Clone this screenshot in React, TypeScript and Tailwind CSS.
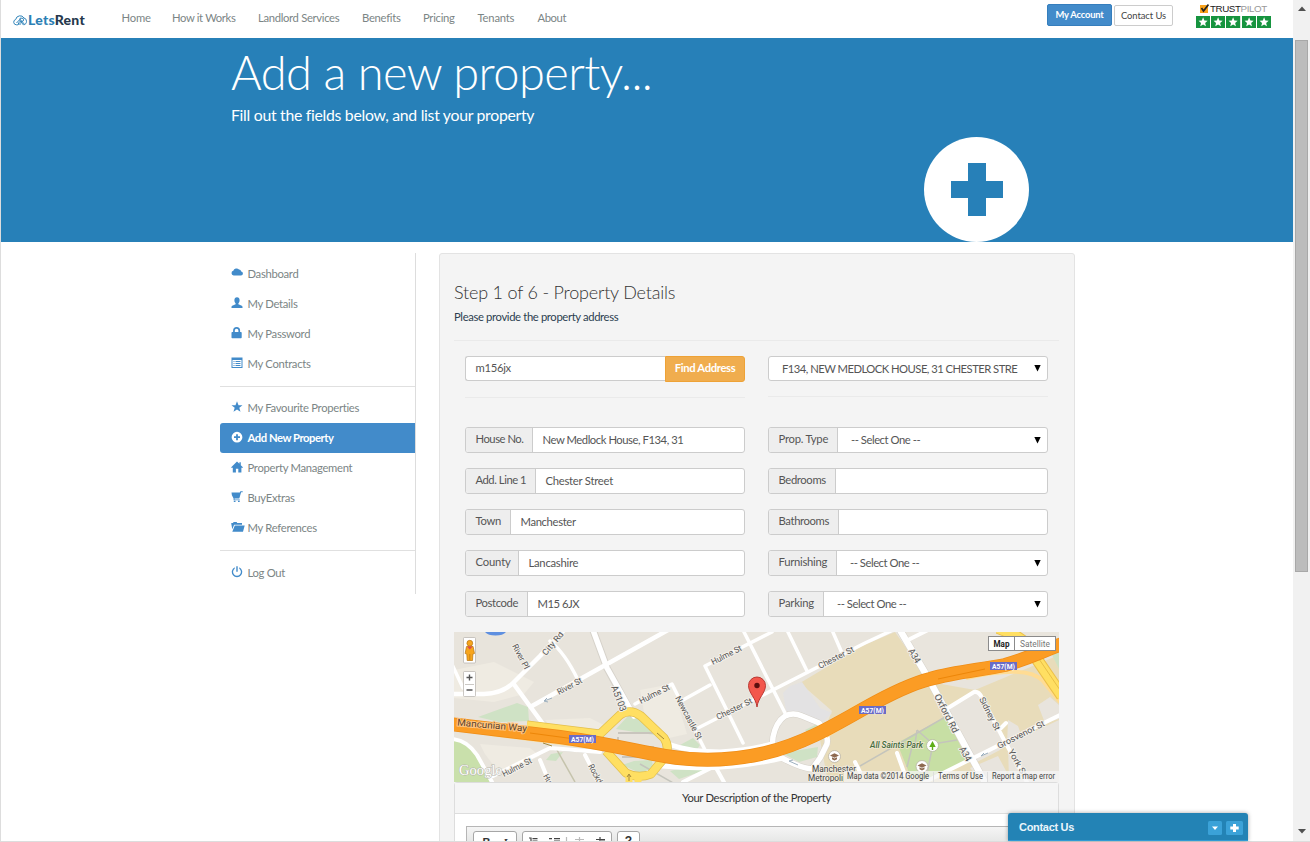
import React from 'react';

const navItems = [
  { label: 'Home', cls: 'w-[50.5px] tracking-[-0.2px]' },
  { label: 'How it Works', cls: 'w-[86px] tracking-[-0.36px]' },
  { label: 'Landlord Services', cls: 'w-[104px] tracking-[-0.32px]' },
  { label: 'Benefits', cls: 'w-[61px] tracking-[-0.28px]' },
  { label: 'Pricing', cls: 'w-[54.5px] tracking-[-0.28px]' },
  { label: 'Tenants', cls: 'w-[60px] tracking-[-0.2px]' },
  { label: 'About', cls: 'tracking-[-0.4px]' },
];

const icons: Record<string, React.ReactNode> = {
  cloud: <path d="M2.600 8.500a2.400 2.400 0 0 1-.3-4.700A3.300 3.300 0 0 1 8 2.600a2.300 2.300 0 0 1 2.200 1.900c1.200.1 1.700 1 1.700 2 0 1.200-.8 2-1.900 2z" />,
  user: <path d="M6 .3c1.700 0 2.600 1.200 2.600 3 0 1.300-.5 2.400-1.200 3v.9l3.400 1.500c.5.250.7.7.7 1.200v1H.5v-1c0-.5.2-.95.7-1.200l3.400-1.500v-.9c-.7-.6-1.200-1.700-1.200-3C3.400 1.500 4.300.3 6 .3z" />,
  lock: <path fillRule="evenodd" d="M2.100 5V3.600a3.500 3.500 0 0 1 7 0V5h.9c.4 0 .7.3.7.7v4.900c0 .4-.3.7-.7.7H1.200c-.4 0-.7-.3-.7-.7V5.700c0-.4.3-.7.7-.7zm1.700 0h3.600V3.600a1.800 1.800 0 0 0-3.600 0z" />,
  list: <path fillRule="evenodd" d="M.5.500h11v10.500H.5zM1.500 3v7h9V3zM2.500 4h1v1h-1zM4.500 4h5v1h-5zM2.500 6h1v1h-1zM4.500 6h5v1h-5zM2.500 8h1v1h-1zM4.500 8h5v1h-5z" />,
  star: <path d="M6 .3l1.500 3.900 4 .1-3.200 2.500 1.200 4L6 8.500l-3.500 2.300 1.200-4L.5 4.300l4-.1z" />,
  plus: <path fillRule="evenodd" d="M6 .8a5.400 5.400 0 1 1 0 10.800A5.400 5.400 0 0 1 6 .8zM5.100 3.200v2.100H3v1.800h2.100v2.100h1.800V7.100H9V5.300H6.900V3.200z" />,
  home: <path d="M6 .4l2.400 2.400V1.200h1.400v3l2.100 2.100v.5h-1.500V11.500H7.300V7.800H4.900v3.700H1.800V6.800H.2v-.5z" />,
  cart: <path d="M.5 1.500h8.300l.6-1.200h2.300v.9h-1.600L8.300 7.600H3.500v.8h5.300v.8H2.600V7.600L.9 4.300zM2.800 9.700h1.700V11H2.800zM7 9.700h1.700V11H7z" />,
  folder: <path d="M.3 3V1.900h1.700l.6-.9h3l.6.900h4.800v1.800H3.100L1.300 8.200.3 3zM3.800 4.500h9.900L12 10.800H1.300z" />,
  off: <path d="M5.300.2h1.400v5.600H5.300zM3.700 1.300v1.500a3.900 3.900 0 1 0 4.600 0V1.300a5.200 5.200 0 1 1-4.600 0z" />,
};

function Glyph({ name }: { name: string }) {
  return (
    <svg className="h-[12px] w-[14px] shrink-0 -translate-y-px" viewBox="0 0 14 12" fill="currentColor">
      {icons[name]}
    </svg>
  );
}

function SideItem({ icon, label, active = false }: { icon: string; label: string; active?: boolean }) {
  return (
    <li
      className={
        active
          ? 'flex h-[30px] items-center gap-[2.5px] rounded-l-[3px] bg-[#428bca] pl-[11px] font-bold tracking-[-0.45px] text-white'
          : 'flex h-[30px] items-center gap-[2.5px] pl-[11px] tracking-[-0.3px] text-[#7b8585]'
      }
    >
      <span className={active ? 'text-white' : 'text-[#428bca]'}>
        <Glyph name={icon} />
      </span>
      <span>{label}</span>
    </li>
  );
}

function Field({ label, value, labelCls, valueCls = 'tracking-[-0.25px]', select = false }: { label: string; value: string; labelCls: string; valueCls?: string; select?: boolean }) {
  return (
    <div className="flex h-[26px] overflow-hidden rounded-[3px] border border-[#ccc] bg-white text-[#555]">
      <div className={'flex shrink-0 items-center whitespace-nowrap border-r border-[#ccc] bg-[#eee] pb-[2px] pl-[9.5px] ' + labelCls}>{label}</div>
      <div className={'flex flex-1 items-center whitespace-nowrap ' + (select ? 'pl-[13px] tracking-[-0.46px]' : 'pl-[9.5px] ' + valueCls)}>{value}</div>
      {select && <Caret />}
    </div>
  );
}

function Caret() {
  return (
    <div className="flex items-center pr-[6px]">
      <svg className="h-[7px] w-[7px]" viewBox="0 0 7 7"><path d="M.3 0h6.400L3.500 6.500z" fill="#000" /></svg>
    </div>
  );
}

function MapLabel({ x, y, r, w, children, size = 8.5 }: { x: number; y: number; r: number; w: number; children: string; size?: number }) {
  return (
    <text x={x} y={y} transform={`rotate(${r} ${x} ${y})`} textLength={w} lengthAdjust="spacingAndGlyphs" fontSize={size} fill="#555" stroke="#f3f0ea" strokeWidth="2" paintOrder="stroke" strokeLinejoin="round">
      {children}
    </text>
  );
}

function Shield({ x, y }: { x: number; y: number }) {
  return (
    <g>
      <rect x={x} y={y} width="27" height="8" fill="#6a6cc6" />
      <text x={x + 2} y={y + 6.500} fontSize="6.800" fontWeight="700" fill="#fff" textLength="23" lengthAdjust="spacingAndGlyphs">A57(M)</text>
    </g>
  );
}

const motorway = 'M450 724L560 737C610 744 640 752 665 756C700 762 735 760 765 753C800 745 830 728 865 708C890 694 910 684 930 679C955 672 980 670 1005 665C1030 658 1040 652 1062 644';
const loop = 'M772 750L773 737Q776 722 785 716Q793 712 802 716L819 723Q829 733 827 744L820 758L812 769Q800 768 780 757';
const interchange = 'M527 725L600 734L620 715Q630 708 641 716L664 738Q670 747 665 757L651 774Q638 779 626 773L606 751';

function PropertyMap() {
  return (
    <svg className="block h-[150px] w-[605px]" viewBox="454 632 605 150" fontFamily="Roboto, sans-serif">
      <rect x="454" y="632" width="605" height="150" fill="#e8e4dc" />
      <g fill="#efebe2">
        <path d="M454 670l40-8 40 20-10 12-30 8-40-4z" />
        <path d="M545 720l45-2 20 10-10 6-50-8z" />
        <path d="M640 690l32-6 15 50-18 4-25-26z" />
        <path d="M480 744l50 4 10 8-40 18-15-20z" />
      </g>
      <path d="M800 683L862 646 895 632 930 682 975 690 1059 655V782H828L820 740 832 711z" fill="#e8dcba" />
      <path d="M903 632h156v18l-60 16-70 14z" fill="#e9e5dd" />
      <path d="M783 693l7-7 12-4 18 26 12 5-9 8-37-10z" fill="#e3e2e3" />
      <path d="M948 709L976 691 1003 737 1000 750 975 763zM1008 720l10 6 5 14-16 6zM1038 705l12-8 9 8v14l-14 4zM1008 744l51-24v62h-50zM970 768l28-12 14 26h-30z" fill="#e8e4dd" />
      <path d="M897 743L947 716 968 763 925 780 910 775z" fill="#c7dfa4" />
      <path d="M454 739Q472 740 479 758L490 782H454z" fill="#c9e0ab" />
      <g fill="#cfe2c5">
        <path d="M478 717l22-8 17-6 11 4 1 14-30 1z" />
        <path d="M616 729l12-13 10 1 17 18-14-2z" />
        <path d="M622 765l12-4 18-1 1 8-13 5z" />
        <path d="M546 760l5-6 12-2-7 9z" />
        <path d="M680 745l13-7 7 7-4 6z" />
        <path d="M670 771l26-6 10 5-27 9z" />
        <path d="M782 753l36-6-1 10-18 5z" />
        <path d="M805 730l12-6 3 4-12 5z" />
        <path d="M1052 655l7-4v18z" />
      </g>
      <path d="M485 632h21q-3 3.500-10.500 3.500T485 632z" fill="#5e8fe0" />
      <path d="M618 733h34v-4M618 737v10h36M622 757h31" fill="none" stroke="#c9c5bd" strokeWidth="2" />
      <path d="M860 766L947 716M897 743l18 1 2-14M917 730l16 14 24-4M933 744l-6 30M907 767l6-24M640 764l35 20M560 750q30 3 40 1" fill="none" stroke="#c4c4bc" strokeWidth="1.500" />
      <path d="M557 750l18 32" fill="none" stroke="#c5c3ac" strokeWidth="1.500" />

      <g fill="none" stroke="#d6d2ca" strokeLinecap="round" strokeLinejoin="round">
        <path d="M593 630L607 668 632 714M900 630L927 676 987 786" strokeWidth="7.500" />
        <path d={loop} strokeWidth="6.500" />
      </g>
      <g fill="none" stroke="#fff" strokeLinecap="round" strokeLinejoin="round">
        <path strokeWidth="4.500" d="M450 694H484Q503 693 513 683L540 656 564 630M513 683L543 724M532 706L668 630" />
        <path strokeWidth="3.500" d="M550 641Q565 653 578 680M450 660L463 688M683 700L710 685M635 704L672 684 706 752M705 666L772 632M705 666L743 743M698 728L865 643 893 630M787 630L807 671M832 630L842 653M743 630L785 713" />
        <path strokeWidth="5.500" d="M593 630L607 668 634 716" />
        <path strokeWidth="6.500" d="M900 630L927 676 987 786" />
        <path strokeWidth="5.500" d={loop} />
        <path strokeWidth="5" d="M668 744Q690 752 720 752 750 750 772 744M662 766Q722 772 782 758" />
        <path strokeWidth="4" d="M683 782L715 766 725 784M452 739Q467 740 477 755L492 782M493 776L550 748 600 752M540 760L550 784M585 755L600 784M908 640L928 630" />
        <path strokeWidth="4" d="M948 708L974 692Q979 691 982 698L1003 738 1028 784M1001 728L1006 723M1062 714L925 782M897 753L905 775M855 762l5 10" />
      </g>
      <g fill="none" strokeLinejoin="round">
        <path d="M490 734L600 748M850 710L905 683M826 736L870 710M966 678Q1027 664 1043 681L1060 702" stroke="#ffdc93" strokeWidth="4" />
        <path d={interchange} stroke="#e3bf4c" strokeWidth="9" />
        <path d={interchange} stroke="#ffdf62" strokeWidth="7.500" />
        <path d="M629 775V784M638 775V784" stroke="#ffdf62" strokeWidth="7" />
        <path d="M998 628Q1030 640 1034 655L1062 696" stroke="#ecc04b" strokeWidth="12" />
        <path d="M998 628Q1030 640 1034 655L1062 696" stroke="#ffdf62" strokeWidth="10" />
        <path d="M1037 656L1062 693" stroke="#e8bf46" strokeWidth="1" />
        <path d={motorway} stroke="#ef8d16" strokeWidth="14" />
        <path d={motorway} stroke="#fb9c24" strokeWidth="12.500" />
        <path d="M530 733L575 739M938 679L985 669" stroke="#ed8608" strokeWidth="1" />
      </g>
      <g stroke="#9db0bf" strokeWidth="1" fill="none">
        <path d="M544 701l8-3M544 701l3-3M544 701l4 1M789 761l9 4M789 761l4-1M981 756l7-3M981 756l3-3" />
        <path d="M543 743l9 3M629 781v-6M627 777l2-3 2 3M657 733l7 6" stroke="#a4883c" />
      </g>

      <MapLabel x={512} y={646} r={62} w={27}>River Pl</MapLabel>
      <MapLabel x={546} y={656} r={-50} w={28}>City Rd</MapLabel>
      <MapLabel x={559} y={695} r={-28} w={27}>River St</MapLabel>
      <MapLabel x={611} y={687} r={69} w={27} size={9.500}>A5103</MapLabel>
      <MapLabel x={641} y={704} r={-27} w={33}>Hulme St</MapLabel>
      <MapLabel x={713} y={665} r={-27} w={33}>Hulme St</MapLabel>
      <MapLabel x={675} y={698} r={62} w={48}>Newcastle St</MapLabel>
      <MapLabel x={718} y={720} r={-26} w={39}>Chester St</MapLabel>
      <MapLabel x={820} y={669} r={-27} w={39}>Chester St</MapLabel>
      <MapLabel x={908} y={651} r={59} w={15} size={9.500}>A34</MapLabel>
      <MapLabel x={934} y={696} r={63} w={42} size={9.500}>Oxford Rd</MapLabel>
      <MapLabel x={959} y={749} r={61} w={15} size={9.500}>A34</MapLabel>
      <MapLabel x={979} y={699} r={63} w={36}>Sidney St</MapLabel>
      <MapLabel x={999} y={749} r={-27} w={52}>Grosvenor St</MapLabel>
      <MapLabel x={1008} y={751} r={61} w={30}>York St</MapLabel>
      <MapLabel x={504} y={777} r={-27} w={32}>Hulme St</MapLabel>
      <MapLabel x={543} y={776} r={62} w={24}>Hunt St</MapLabel>
      <MapLabel x={588} y={766} r={62} w={32}>Rockdove</MapLabel>
      <g transform="rotate(5 457 725)">
        <text x="457" y="725.500" fontSize="9.500" fill="#5b422c" stroke="#ffc681" strokeWidth="2" paintOrder="stroke" textLength="70" lengthAdjust="spacingAndGlyphs">Mancunian Way</text>
      </g>
      <Shield x={569} y={735} />
      <Shield x={859} y={706} />
      <Shield x={990} y={662} />
      <text x="870" y="748" fontSize="8.500" fontStyle="italic" fontWeight="500" fill="#456b3d" stroke="#eee7d2" strokeWidth="1.500" paintOrder="stroke" textLength="53" lengthAdjust="spacingAndGlyphs">All Saints Park</text>
      <circle cx="932.500" cy="745.500" r="6" fill="#fff" stroke="#b3b79c" strokeWidth=".8" />
      <path d="M932.500 741l3.200 6h-2.500v3h-1.400v-3h-2.500z" fill="#5fae19" />
      {[{ x: 834.5, y: 756.5 }, { x: 922, y: 766.5 }].map((p) => (
        <g key={p.x}>
          <circle cx={p.x} cy={p.y} r="6" fill="#fff" stroke="#b9b2a3" strokeWidth=".8" />
          <path d={`M${p.x - 4.500} ${p.y - 1}l4.500-2.200 4.500 2.200-4.500 2.200zM${p.x - 2.500} ${p.y + 0.8}v2l2.500 1.200 2.500-1.200v-2l-2.500 1.200z`} fill="#8e6a51" />
        </g>
      ))}
      <g fontSize="8.500" fill="#444" stroke="#f3eee2" strokeWidth="1.500" paintOrder="stroke">
        <text x="812" y="772" textLength="44" lengthAdjust="spacingAndGlyphs">Manchester</text>
        <text x="808" y="781" textLength="35" lengthAdjust="spacingAndGlyphs">Metropoli</text>
      </g>
      <rect x="844" y="771" width="215" height="11" fill="#f5f5f5" fillOpacity=".75" />
      <g fontSize="8.200" fill="#444">
        <text x="847" y="779" textLength="82" lengthAdjust="spacingAndGlyphs">Map data ©2014 Google</text>
        <text x="938" y="779" textLength="45" lengthAdjust="spacingAndGlyphs">Terms of Use</text>
        <text x="992" y="779" textLength="63" lengthAdjust="spacingAndGlyphs">Report a map error</text>
      </g>
      <path d="M933.500 772v10M987.500 772v10" stroke="#ddd" />
      <text x="459" y="775" fontFamily="'Liberation Serif', serif" fontSize="14.500" fill="#fff" stroke="#b5b5ac" strokeWidth="1" paintOrder="stroke" textLength="43" lengthAdjust="spacingAndGlyphs">Google</text>

      <path d="M757 707C756 698 748.500 693 748.500 685.500A8.500 8.500 0 0 1 765.500 685.500C765.500 693 758 698 757 707z" fill="#f3574c" stroke="#b3302a" strokeWidth=".9" />
      <circle cx="757" cy="685.500" r="2.700" fill="#5c0f0e" />

      <g stroke="#b4b0aa" strokeWidth=".7">
        <rect x="463.500" y="637.500" width="12" height="25.500" rx="1" fill="#fff" />
        <rect x="463.500" y="671.500" width="12" height="25" rx="1" fill="#fff" />
        <path d="M465 684.500h9" />
      </g>
      <path d="M466.500 677.500h6M469.500 674.500v6M466.500 690h6" stroke="#555" strokeWidth="1.400" />
      <circle cx="469.800" cy="643.200" r="2.900" fill="#f7a51c" stroke="#b57414" strokeWidth=".7" />
      <path d="M466.500 646.500h6.600l1.400 7-1.600.5-.4 6.500h-5.300l-.4-6.500-1.700-.5z" fill="#f7a51c" stroke="#b57414" strokeWidth=".7" />
      <path d="M467 646.500h5.600l-2.800 3z" fill="#e0484a" />
      <path d="M469.800 654v6" stroke="#b57414" strokeWidth=".7" />

      <rect x="988.500" y="636.500" width="67" height="14" fill="#fff" stroke="#8b8b8b" strokeWidth="1" />
      <path d="M1014.500 637v14" stroke="#8b8b8b" />
      <text x="993.500" y="647" fontSize="8.300" fontWeight="700" fill="#222" textLength="16" lengthAdjust="spacingAndGlyphs">Map</text>
      <text x="1020" y="647" fontSize="8.300" fill="#777" textLength="30" lengthAdjust="spacingAndGlyphs">Satellite</text>
    </svg>
  );
}

function Logo() {
  return (
    <div className="flex h-[38px] w-[120px] items-center pl-[12px] pt-[2px]">
      <svg className="h-[11px] w-[15px] shrink-0" viewBox="0 0 15 11" fill="none" stroke="#2f83b9" strokeWidth="1">
        <path d="M5 9.800H3.300A2.700 2.700 0 0 1 2.700 4.500 4.500 4.500 0 0 1 11 3a3.300 3.300 0 0 1 2.500 3.300c0 2-1.200 3.300-2.800 3.500" />
        <path d="M3.500 8L7 4.300l4.500 5M5.500 9.800V7.500M7 10V3.200h2a1.600 1.600 0 0 1 0 3.200H7.500l3 3.600" />
      </svg>
      <span className="font-['Lato',sans-serif] text-[14px] font-black leading-none tracking-[0.25px] text-[#2b80b5]">
        Lets<span className="text-[#26384d]">Rent</span>
      </span>
    </div>
  );
}

function TrustPilot() {
  return (
    <div className="flex w-[75px] flex-col gap-[2px] pt-[3px]">
      <div className="flex h-[11px] items-center pl-[4px]">
        <svg className="h-[9px] w-[9px]" viewBox="0 0 9 9"><path d="M0 1h8v8H0z" fill="#f9a21b" /><path d="M1.500 4l2 3L8.500.5" fill="none" stroke="#222" strokeWidth="1.700" /></svg>
        <span className="ml-px font-['Liberation_Sans',sans-serif] text-[9.8px] leading-none tracking-[-0.42px] text-[#222]">TRUST<span className="text-[#999]">PILOT</span></span>
      </div>
      <div className="flex gap-px">
        {[0, 1, 2, 3, 4].map((i) => (
          <svg key={i} className="h-[12px] w-[14.2px]" viewBox="0 0 14.400 12" preserveAspectRatio="none"><path d="M0 0h14.400v12H0z" fill="#16943f" /><path d="M7.200 1.300l1.300 3.100 3.300.3-2.500 2.200.8 3.300-2.900-1.800-2.900 1.800.8-3.300-2.500-2.200 3.300-.3z" fill="#fff" /></svg>
        ))}
      </div>
    </div>
  );
}

function EditorToolbar() {
  return (
    <div className="mx-[11px] mt-[12px] flex h-[40px] gap-[5px] border border-[#b6b6b6] bg-linear-to-b from-[#f5f5f5] to-[#cfd1cf] pl-[6px] pt-[4px]">
      <div className="flex h-[26px] w-[44px] items-start justify-around rounded-[3px] border border-[#a6a6a6] bg-white px-[2px] pt-[3px] font-['Liberation_Sans',sans-serif] text-[11px] font-bold leading-[14px] text-[#333]">
        <span>B</span>
        <span className="font-['Liberation_Serif',serif] italic">I</span>
      </div>
      <div className="h-[26px] w-[90px] rounded-[3px] border border-[#a6a6a6] bg-white">
        <svg className="h-[24px] w-[88px]" viewBox="0 0 88 24" fill="none" stroke="#444" strokeWidth="1.200">
          <path d="M6 6h2v6M9.500 6.600h5M9.500 9h5M26 6.600h3M31 6.600h6M31 9h6" />
          <path d="M43.500 5v14" stroke="#bbb" />
          <path d="M52 7.500h9M56.500 5v6" stroke="#bbb" />
          <path d="M73 7.500h9M77 5v6M78 9h4" />
        </svg>
      </div>
      <div className="h-[26px] w-[23px] rounded-[3px] border border-[#a6a6a6] bg-white pt-[2px] text-center font-['Liberation_Sans',sans-serif] text-[12px] font-bold leading-[14px] text-[#333]">?</div>
    </div>
  );
}

export default function App() {
  return (
    <div className="relative flex h-[842px] w-[1310px] overflow-hidden bg-white font-['Lato',sans-serif] text-[11.25px] leading-[16px] text-[#2c3e50]">
      <div className="flex w-[1293px] flex-col border-l border-[#ddd]">
        <header className="flex h-[38px] shrink-0">
          <Logo />
          <nav className="flex flex-1 pl-[0.5px] pt-[10px] text-[#7b8585]">
            {navItems.map((n) => (
              <a key={n.label} className={'shrink-0 whitespace-nowrap ' + n.cls}>{n.label}</a>
            ))}
          </nav>
          <div className="flex w-[149px] gap-[2px] pt-[4px] text-[9.4px]">
            <button className="h-[22px] w-[65px] rounded-[2px] border border-[#357ebd] bg-[#428bca] font-bold tracking-[-0.2px] text-white">My Account</button>
            <button className="mt-px h-[21px] w-[59px] rounded-[2px] border border-[#ccc] bg-white tracking-[-0.05px] text-[#444]">Contact Us</button>
          </div>
          <div className="w-[97px]"><TrustPilot /></div>
        </header>

        <section className="flex h-[204px] shrink-0 justify-between bg-[#2780b8] pl-[230px] pr-[264px] text-white">
          <div className="pt-[6px]">
            <h1 className="text-[47px] font-light leading-[56px] tracking-[-0.6px]">Add a new property...</h1>
            <p className="mt-[4px] text-[15.8px] leading-[21px] tracking-[-0.29px]">Fill out the fields below, and list your property</p>
          </div>
          <svg className="mt-[99px] h-[105px] w-[105px]" viewBox="0 0 105 105"><circle cx="52.500" cy="52.500" r="52.500" fill="#fff" /><path d="M44 26h18v18h17v17H62v18H44V61H27V44h17z" fill="#2780b8" /></svg>
        </section>

        <div className="flex min-h-0 flex-1 pl-[219px] pt-[11px]">
          <aside className="h-[341px] w-[196px] border-r border-[#ddd] pt-[6px]">
            <ul>
              <SideItem icon="cloud" label="Dashboard" />
              <SideItem icon="user" label="My Details" />
              <SideItem icon="lock" label="My Password" />
              <SideItem icon="list" label="My Contracts" />
            </ul>
            <ul className="mt-[7px] border-t border-[#e0e0e0] pt-[6px]">
              <SideItem icon="star" label="My Favourite Properties" />
              <SideItem icon="plus" label="Add New Property" active />
              <SideItem icon="home" label="Property Management" />
              <SideItem icon="cart" label="BuyExtras" />
              <SideItem icon="folder" label="My References" />
            </ul>
            <ul className="mt-[7px] border-t border-[#e0e0e0] pt-[7px]">
              <SideItem icon="off" label="Log Out" />
            </ul>
          </aside>

          <main className="ml-[23px] h-[640px] w-[636px] rounded-t-[3px] border border-[#e3e3e3] bg-[#f4f4f4] px-[14px] pt-[26px]">
            <h2 className="text-[18px] font-light leading-[24px] tracking-[-0.2px] text-[#333]">Step 1 of 6 - Property Details</h2>
            <p className="mt-[5px] tracking-[-0.36px] text-[#2c3e50]">Please provide the property address</p>
            <hr className="mt-[15px] w-[605px] border-[#eaeaea]" />

            <div className="flex gap-[23px] px-[11px] pt-[15px] text-[#555]">
              <div className="w-[280px]">
                <div className="flex h-[26px]">
                  <div className="flex h-[25px] flex-1 items-center rounded-l-[3px] border border-r-0 border-[#ccc] bg-white pb-px pl-[9.5px] tracking-[-0.3px]">m156jx</div>
                  <button className="h-[26px] w-[80px] rounded-r-[3px] border border-[#eea236] bg-[#f0ad4e] pb-[2px] font-bold tracking-[-0.35px] text-white">Find Address</button>
                </div>
                <hr className="mt-[15px] border-[#eaeaea]" />
                <div className="mt-[29px] flex flex-col gap-[15px]">
                  <Field label="House No." value="New Medlock House, F134, 31" labelCls="w-[67px] tracking-[-0.48px]" valueCls="tracking-[-0.45px]" />
                  <Field label="Add. Line 1" value="Chester Street" labelCls="w-[70px] tracking-[-0.46px]" />
                  <Field label="Town" value="Manchester" labelCls="w-[45px] tracking-[-0.3px]" valueCls="tracking-[-0.35px]" />
                  <Field label="County" value="Lancashire" labelCls="w-[53px] tracking-[-0.15px]" />
                  <Field label="Postcode" value="M15 6JX" labelCls="w-[62px] tracking-[-0.38px]" valueCls="tracking-[-0.5px]" />
                </div>
              </div>
              <div className="w-[280px]">
                <div className="flex h-[25px] rounded-[3px] border border-[#ccc] bg-white pl-[13px]">
                  <div className="flex flex-1 items-center whitespace-nowrap tracking-[-0.53px]">F134, NEW MEDLOCK HOUSE, 31 CHESTER STRE</div>
                  <Caret />
                </div>
                <hr className="mt-[15px] border-[#eaeaea]" />
                <div className="mt-[30px] flex flex-col gap-[15px]">
                  <Field label="Prop. Type" value="-- Select One --" labelCls="w-[69px] tracking-[-0.25px]" select />
                  <Field label="Bedrooms" value="" labelCls="w-[67px] tracking-[-0.36px]" />
                  <Field label="Bathrooms" value="" labelCls="w-[70px] tracking-[-0.36px]" />
                  <Field label="Furnishing" value="-- Select One --" labelCls="w-[68px] tracking-[-0.28px]" select />
                  <Field label="Parking" value="-- Select One --" labelCls="w-[55px] tracking-[-0.2px]" select />
                </div>
              </div>
            </div>

            <div className="mt-[15px]"><PropertyMap /></div>
            <div className="h-[90px] w-[605px] rounded-t-[3px] border border-[#ddd] bg-white">
              <div className="flex h-[31px] items-center justify-center border-b border-[#ddd] bg-[#f5f5f5] tracking-[-0.35px] text-[#333]">Your Description of the Property</div>
              <EditorToolbar />
            </div>
          </main>
        </div>
      </div>

      <div className="flex w-[17px] flex-col items-center bg-[#f1f1f1]">
        <svg className="mt-[6px] h-[5px] w-[8px] shrink-0" viewBox="0 0 8 5"><path d="M0 5L4 .5 8 5z" fill="#505050" /></svg>
        <div className="mt-[29px] h-[532px] w-[13px] shrink-0 border border-[#a8a8a8] bg-[#bcbcbc]" />
        <svg className="mt-[257px] h-[5px] w-[8px] shrink-0" viewBox="0 0 8 5"><path d="M0 0h8L4 4.500z" fill="#505050" /></svg>
      </div>

      <div className="absolute bottom-0 left-0 h-px w-full bg-[#ddd]" />
      <div className="absolute left-[1008px] top-[813px] flex h-[28px] w-[240px] items-center gap-[4px] rounded-t-[3px] border-b border-[#2f9bd5] bg-[#2383b5] pl-[11px] pr-[5px] shadow-[0_0_4px_rgba(0,0,0,0.35)]">
        <span className="flex-1 font-['Liberation_Sans',sans-serif] text-[11px] font-bold tracking-[-0.3px] text-[#eaf5fb]">Contact Us</span>
        <svg className="mt-[2px] h-[14px] w-[14px]" viewBox="0 0 14 14"><rect width="14" height="14" rx="1.500" fill="#3ba2d8" /><path d="M4 5.500h6L7 9z" fill="#fff" /></svg>
        <svg className="mt-[2px] h-[14px] w-[17px]" viewBox="0 0 17 14"><rect width="17" height="14" rx="1.500" fill="#3ba2d8" /><path d="M7 3h3v2.500h2.700v3H10V11H7V8.500H4.300v-3H7z" fill="#fff" /></svg>
      </div>
    </div>
  );
}
